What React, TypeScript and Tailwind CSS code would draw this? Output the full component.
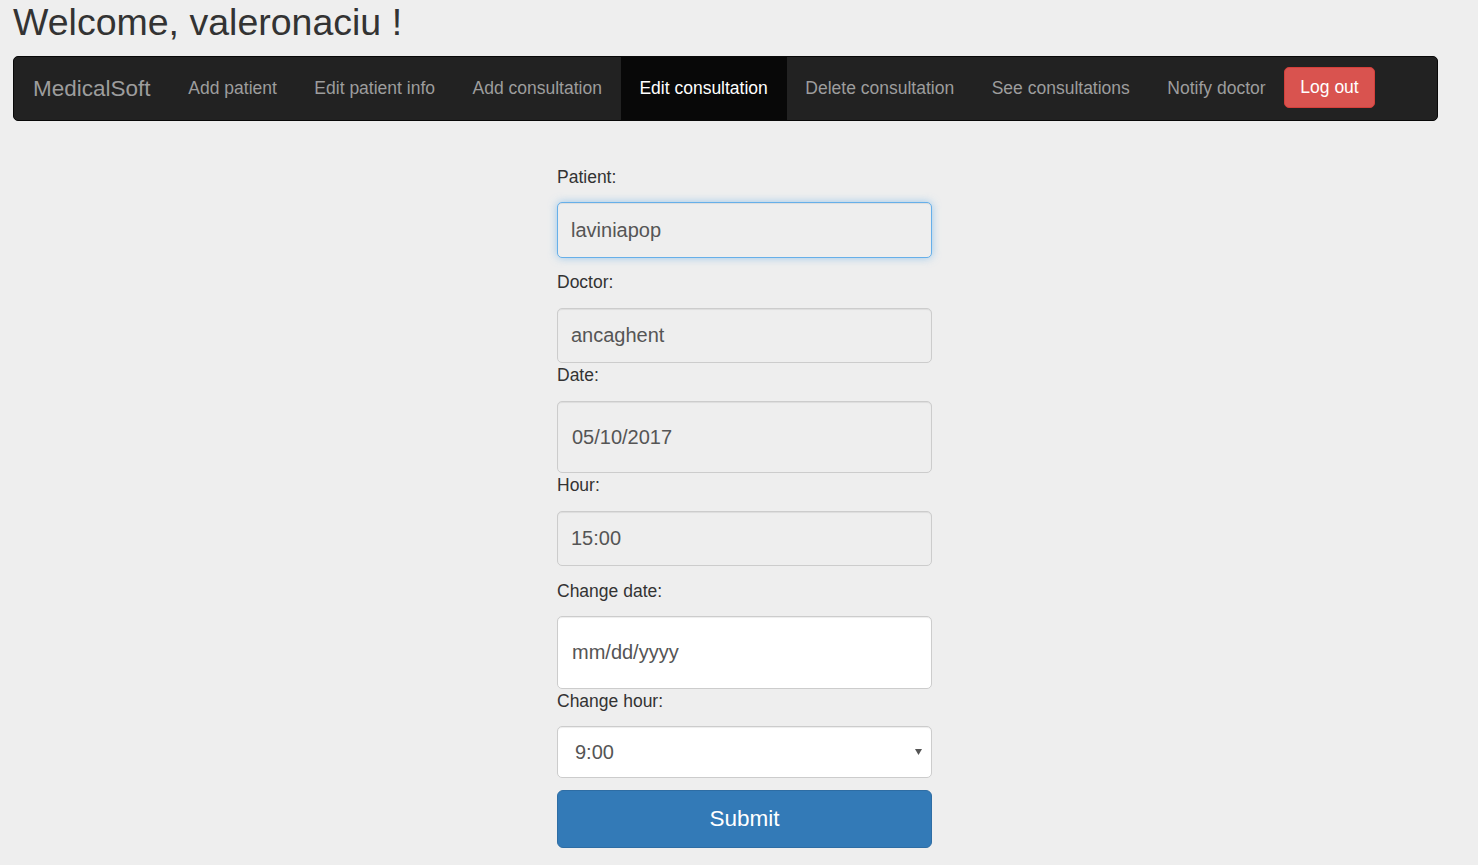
import React from "react";

const font = { fontFamily: '"Liberation Sans", Arial, Helvetica, sans-serif' };

function Label({ children, className = "" }: { children: React.ReactNode; className?: string }) {
  return (
    <label className={`block text-[17.5px] leading-[25px] text-[#333333] ${className}`}>{children}</label>
  );
}

export default function App() {
  const links = [
    "Add patient",
    "Edit patient info",
    "Add consultation",
    "Edit consultation",
    "Delete consultation",
    "See consultations",
    "Notify doctor",
  ];
  return (
    <div className="min-h-screen bg-[#eeeeee] pl-[13px] pt-[2px] pb-[20px]" style={font}>
      <h1 className="m-0 text-[37.5px] leading-[40px] font-normal text-[#333333]">Welcome, valeronaciu !</h1>

      <nav className="mt-[14px] flex h-[65px] w-[1425px] items-stretch rounded-[5px] border border-[#080808] bg-[#222222]">
        <div className="flex items-center px-[19px] text-[22.5px] text-[#9d9d9d]">MedicalSoft</div>
        {links.map((l) =>
          l === "Edit consultation" ? (
            <div key={l} className="flex items-center bg-[#080808] px-[18.75px] text-[17.5px] text-white">
              {l}
            </div>
          ) : (
            <div key={l} className="flex items-center px-[18.75px] text-[17.5px] text-[#9d9d9d]">
              {l}
            </div>
          )
        )}
        <div className="self-start mt-[10px] flex h-[41px] items-center rounded-[5px] border border-[#d43f3a] bg-[#d9534f] px-[15px] text-[17.5px] text-white">
          Log out
        </div>
      </nav>

      <form className="ml-[544px] mt-[44px] w-[375px]" onSubmit={(e) => e.preventDefault()}>
        <Label>Patient:</Label>
        <input
          readOnly
          value="laviniapop"
          className="mt-[12px] block h-[56px] w-full rounded-[5px] border border-[#66afe9] bg-[#eeeeee] pl-[13px] text-[20px] text-[#555555] outline-none shadow-[inset_0_1px_1px_rgba(0,0,0,0.075),0_0_8px_rgba(102,175,233,0.6)]"
          style={font}
        />

        <Label className="mt-[12px]">Doctor:</Label>
        <input
          readOnly
          value="ancaghent"
          className="mt-[13px] block h-[55px] w-full rounded-[5px] border border-[#cccccc] bg-[#eeeeee] pl-[13px] text-[20px] text-[#555555] outline-none shadow-[inset_0_1px_1px_rgba(0,0,0,0.075)]"
          style={font}
        />

        <Label>Date:</Label>
        <input
          readOnly
          value="05/10/2017"
          className="mt-[13px] block h-[72px] w-full rounded-[5px] border border-[#cccccc] bg-[#eeeeee] pl-[14px] text-[20px] text-[#555555] outline-none shadow-[inset_0_1px_1px_rgba(0,0,0,0.075)]"
          style={font}
        />

        <Label>Hour:</Label>
        <input
          readOnly
          value="15:00"
          className="mt-[13px] block h-[55px] w-full rounded-[5px] border border-[#cccccc] bg-[#eeeeee] pl-[13px] text-[20px] text-[#555555] outline-none shadow-[inset_0_1px_1px_rgba(0,0,0,0.075)]"
          style={font}
        />

        <Label className="mt-[13px]">Change date:</Label>
        <input
          type="text"
          placeholder="mm/dd/yyyy"
          className="mt-[12px] block h-[73px] w-full rounded-[5px] border border-[#cccccc] bg-white pl-[14px] text-[20px] text-[#555555] placeholder:text-[#555555] outline-none shadow-[inset_0_1px_1px_rgba(0,0,0,0.075)]"
          style={font}
        />

        <Label>Change hour:</Label>
        <div className="relative mt-[12px] h-[52px] w-full">
          <select
            defaultValue="9:00"
            className="block h-full w-full appearance-none rounded-[5px] border border-[#cccccc] bg-white pl-[17px] text-[20px] text-[#555555] outline-none shadow-[inset_0_1px_1px_rgba(0,0,0,0.075)]"
            style={font}
          >
            <option>9:00</option>
            <option>10:00</option>
            <option>11:00</option>
            <option>12:00</option>
          </select>
          <svg className="pointer-events-none absolute right-[10px] top-[23px]" width="7" height="6" viewBox="0 0 7 6">
            <path d="M0 0 H7 L3.5 6 Z" fill="#555555" />
          </svg>
        </div>

        <button
          type="submit"
          className="mt-[12px] block h-[58px] w-full rounded-[6px] border border-[#2e6da4] bg-[#337ab7] text-[22.5px] text-white"
          style={font}
        >
          Submit
        </button>
      </form>
    </div>
  );
}
